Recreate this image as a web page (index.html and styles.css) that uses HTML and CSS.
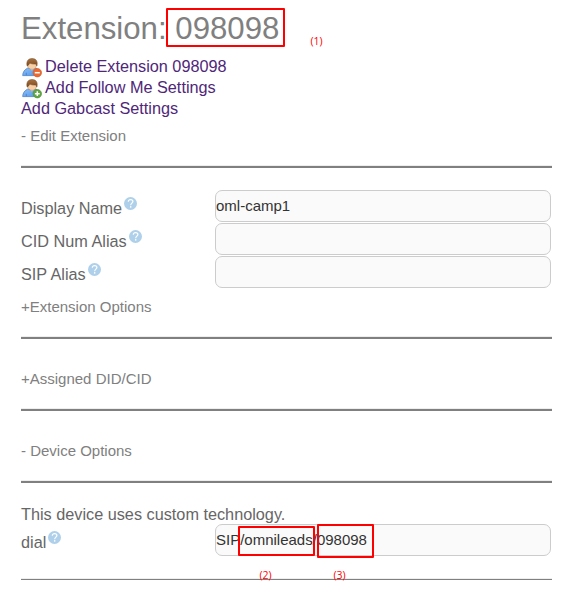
FILE: index.html
```html
<!DOCTYPE html>
<html lang="en">
<head>
<meta charset="utf-8">
<title>Extension: 098098</title>
<link rel="stylesheet" href="styles.css">
</head>
<body>
<svg class="defs" width="0" height="0" aria-hidden="true">
  <defs>
    <linearGradient id="shirt" x1="0" y1="0" x2="1" y2="1"><stop offset="0" stop-color="#8fc0f7"/><stop offset="1" stop-color="#4a93ea"/></linearGradient>
    <linearGradient id="hair" x1="0" y1="0" x2="0" y2="1"><stop offset="0" stop-color="#a87341"/><stop offset="1" stop-color="#7c4a20"/></linearGradient>
    <symbol id="user" viewBox="0 0 20 20">
      <path d="M.7 17.600C.7 14.500 2.400 11.600 5.500 10.200h8.500c2.400 1 3.800 4 3.800 7.400z" fill="url(#shirt)" stroke="#4a7fc4" stroke-width=".8"/>
      <path d="M4.300 17.200v-2.400" stroke="#3f77c2" stroke-width=".7"/>
      <path d="M7.800 10.300l2 2.300 2.500-2.300z" fill="#f3cda7"/>
      <path d="M5.600 4.500h8.800v3.100c0 2.300-2 3.700-4.300 3.700s-4.500-1.400-4.500-3.700z" fill="#f8cfa4" stroke="#b9824f" stroke-width=".5"/>
      <path d="M5.100 8C4.100 3.500 5.900.5 10.100.5s5.900 3 4.800 7.500l-.9-2c-2.600.2-4.700-.1-6.300-1-.4 1.300-1.200 2.200-2.600 3z" fill="url(#hair)" stroke="#744620" stroke-width=".5"/>
    </symbol>
    <symbol id="help" viewBox="0 0 13 13">
      <circle cx="6.500" cy="6.500" r="6.500" fill="#aed0ea"/>
      <path d="M4.300 4.700c0-1.300.9-2.100 2.300-2.100s2.300.8 2.300 1.900c0 1.600-2.200 1.800-2.200 3.700" fill="none" stroke="#fff" stroke-width="1.200"/>
      <circle cx="6.700" cy="9.900" r=".8" fill="#fff"/>
    </symbol>
  </defs>
</svg>
<main class="page">
  <h1 class="title">Extension: 098098</h1>
  <nav class="links">
    <a class="link"><svg class="user-icon" viewBox="0 0 20 20"><use href="#user"/><circle cx="15.300" cy="14.700" r="4.200" fill="#ec6a30" stroke="#d4592a" stroke-width=".7"/><path d="M12.800 14.700h5" stroke="#fff" stroke-width="1.500"/></svg>Delete Extension 098098</a>
    <a class="link"><svg class="user-icon" viewBox="0 0 20 20"><use href="#user"/><circle cx="15.300" cy="14.700" r="4.200" fill="#62a544" stroke="#4f9238" stroke-width=".7"/><path d="M12.900 14.700h4.800M15.300 12.300v4.800" stroke="#fff" stroke-width="1.500"/></svg>Add Follow Me Settings</a>
    <a class="link">Add Gabcast Settings</a>
  </nav>
  <h5 class="section first">- Edit Extension</h5>
  <form class="fields">
    <label class="row"><span class="label">Display Name<svg class="help"><use href="#help"/></svg></span><input class="input" type="text" value="oml-camp1"></label>
    <label class="row"><span class="label">CID Num Alias<svg class="help"><use href="#help"/></svg></span><input class="input" type="text"></label>
    <label class="row"><span class="label">SIP Alias<svg class="help"><use href="#help"/></svg></span><input class="input" type="text"></label>
  </form>
  <h5 class="section options">+Extension Options</h5>
  <h5 class="section">+Assigned DID/CID</h5>
  <h5 class="section">- Device Options</h5>
  <p class="note">This device uses custom technology.</p>
  <label class="row dial"><span class="label">dial<svg class="help"><use href="#help"/></svg></span><input class="input" type="text" value="SIP/omnileads/098098"></label>
  <div class="end-rule"></div>
</main>
<div class="mark mark-1"></div>
<div class="mark mark-2"></div>
<div class="mark mark-3"></div>
<span class="tag tag-1">(1)</span>
<span class="tag tag-2">(2)</span>
<span class="tag tag-3">(3)</span>
</body>
</html>
```
FILE: styles.css
```css
* { box-sizing: border-box; }
body {
  position: relative;
  height: 610px;
  margin: 0;
  overflow: hidden;
  background: #fff;
  color: #666;
  font: 16.25px/21px "Liberation Sans", Arial, sans-serif;
}
.defs { position: absolute; }
.page { padding: 8px 31px 0 21px; }
.title {
  height: 48px;
  margin: 0;
  color: #808080;
  font-size: 31.2px;
  font-weight: 400;
  line-height: 42px;
}
.links { display: flex; flex-direction: column; }
.link {
  display: flex;
  align-items: center;
  height: 21px;
  color: #4f2779;
}
.user-icon { width: 20px; height: 20px; margin: 2px 3px 0 1px; flex: none; }
.section {
  height: 72px;
  margin: 0;
  padding-top: 29px;
  border-bottom: 2px solid #808080;
  box-shadow: inset 0 -1px #eee;
  color: #808080;
  font-size: 15px;
  font-weight: 400;
  line-height: 21px;
}
.first { height: 49px; padding-top: 6px; }
.options { height: 51px; padding-top: 8px; }
.fields { display: grid; gap: 1px; margin: 22px 0 0; }
.row { display: grid; grid-template-columns: 194px 336px; height: 32px; }
.label { display: flex; padding-top: 8px; }
.help { width: 13px; height: 13px; margin: -1px 0 0 2px; }
.input {
  width: 336px;
  height: 32px;
  padding: 0 0 1px;
  border: 1px solid #ccc;
  border-radius: 7px;
  background: #fafafa;
  color: #333;
  font: 15px "Liberation Sans", Arial, sans-serif;
}
.note { height: 20px; margin: 21px 0 0; }
.end-rule { height: 24px; border-bottom: 1px solid #808080; box-shadow: inset 0 -1px #eee; }
.mark { position: absolute; border: 2px solid #f00; border-radius: 1px; }
.mark-1 { left: 166px; top: 8px; width: 119px; height: 39px; }
.mark-2 { left: 238px; top: 526px; width: 77px; height: 30px; }
.mark-3 { left: 317px; top: 524px; width: 57px; height: 34px; }
.tag { position: absolute; color: #f00; font: 10.5px/14px "Open Sans", "Noto Sans", sans-serif; }
.tag-1 { left: 310.5px; top: 34px; }
.tag-2 { left: 259.5px; top: 568px; }
.tag-3 { left: 333.5px; top: 568px; }
```
